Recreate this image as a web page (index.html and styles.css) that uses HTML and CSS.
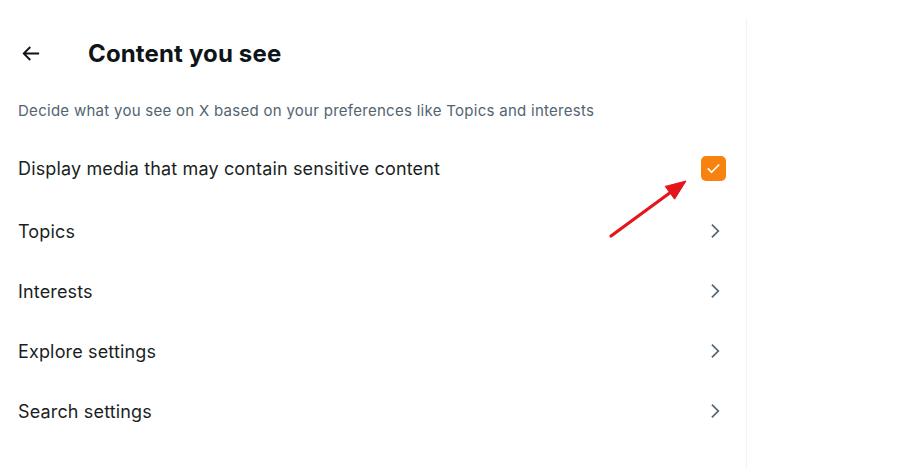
FILE: index.html
```html
<!DOCTYPE html>
<html lang="en">
<head>
<meta charset="utf-8">
<title>Content you see</title>
<link rel="stylesheet" href="styles.css">
</head>
<body>
<div class="page">
  <main class="column">
    <header class="header">
      <button class="back" aria-label="Back">
        <svg viewBox="0 0 24 24" width="23" height="23"><path d="M7.414 13l5.043 5.04-1.414 1.42L3.586 12l7.457-7.46 1.414 1.42L7.414 11H21v2H7.414z" fill="#0f1419"/></svg>
      </button>
      <h1 class="title">Content you see</h1>
    </header>
    <p class="desc">Decide what you see on X based on your preferences like Topics and interests</p>
    <div class="row row-check">
      <span class="label">Display media that may contain sensitive content</span>
      <span class="checkbox">
        <svg viewBox="0 0 24 24" width="21" height="21"><path d="M6 12.5l3.8 3.8L18 8" fill="none" stroke="#fff" stroke-width="1.9" stroke-linecap="round" stroke-linejoin="round"/></svg>
      </span>
      <svg class="pointer" width="90" height="70" viewBox="0 0 90 70">
        <line x1="5" y1="62" x2="65" y2="18" stroke="#e3161b" stroke-width="3.2" stroke-linecap="round"/>
        <polygon points="80,7 59.2,12.4 68.6,25.2" fill="#e3161b" stroke="#e3161b" stroke-width="1" stroke-linejoin="round"/>
      </svg>
    </div>
    <div class="row"><span class="label">Topics</span><svg class="chev" viewBox="0 0 24 24" width="20" height="20"><path d="M14.586 12L7.543 4.96l1.414-1.42L17.414 12l-8.457 8.46-1.414-1.42L14.586 12z" fill="#536471"/></svg></div>
    <div class="row"><span class="label">Interests</span><svg class="chev" viewBox="0 0 24 24" width="20" height="20"><path d="M14.586 12L7.543 4.96l1.414-1.42L17.414 12l-8.457 8.46-1.414-1.42L14.586 12z" fill="#536471"/></svg></div>
    <div class="row"><span class="label">Explore settings</span><svg class="chev" viewBox="0 0 24 24" width="20" height="20"><path d="M14.586 12L7.543 4.96l1.414-1.42L17.414 12l-8.457 8.46-1.414-1.42L14.586 12z" fill="#536471"/></svg></div>
    <div class="row"><span class="label">Search settings</span><svg class="chev" viewBox="0 0 24 24" width="20" height="20"><path d="M14.586 12L7.543 4.96l1.414-1.42L17.414 12l-8.457 8.46-1.414-1.42L14.586 12z" fill="#536471"/></svg></div>
  </main>
</div>
</body>
</html>
```
FILE: styles.css
```css
* { box-sizing: border-box; }
html, body { margin: 0; padding: 0; background: #fff; }
body {
  font-family: Inter, "Noto Sans", sans-serif;
  color: #0f1419;
  width: 902px;
  height: 468px;
  overflow: hidden;
}
.page { padding-top: 18px; }
.column {
  width: 747px;
  height: 450px;
  border-right: 1px solid #eff3f4;
}
.header {
  display: flex;
  align-items: center;
  height: 70px;
  padding-left: 19px;
}
.back {
  border: 0;
  background: none;
  padding: 0;
  width: 23px;
  height: 23px;
  display: flex;
  margin-right: 46px;
}
.title {
  margin: 0;
  font-size: 24px;
  font-weight: 700;
  letter-spacing: 0.15px;
  color: #0f1419;
}
.desc {
  margin: 13px 0 0;
  padding: 0 18px;
  font-size: 15px;
  line-height: 20px;
  color: #536471;
  letter-spacing: 0.28px;
}
.row {
  display: flex;
  align-items: center;
  justify-content: space-between;
  height: 60px;
  padding: 0 19px 0 18px;
  position: relative;
}
.row-check { height: 58px; margin: 18px 0 4px; padding-right: 20px; }
.label { font-size: 18px; letter-spacing: 0.15px; color: #1a1f24; }
.checkbox {
  width: 25px;
  height: 25px;
  border-radius: 5px;
  background: #f8820f;
  display: flex;
  align-items: center;
  justify-content: center;
}
.chev { margin-right: 2px; }
.pointer {
  position: absolute;
  left: 606px;
  top: 35px;
}
```
